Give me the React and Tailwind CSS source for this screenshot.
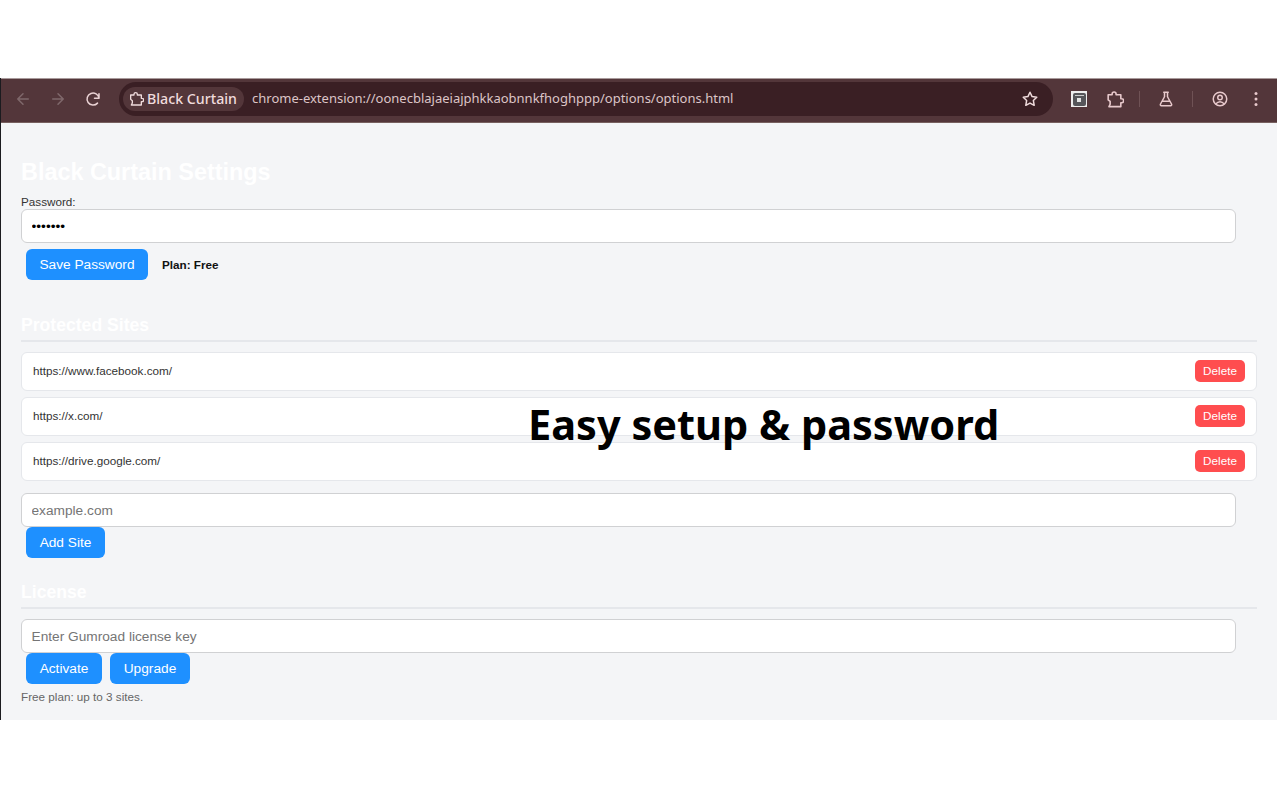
import React from "react";

const Btn = ({ children, w }) => (
  <button className={`h-[31px] ${w} pt-px rounded-[6px] bg-[#1e90ff] text-white text-[13.7px] font-['Liberation_Sans',sans-serif] shrink-0`}>{children}</button>
);

const TextInput = ({ placeholder, value, type = "text" }) => (
  <input
    readOnly
    type={type}
    placeholder={placeholder}
    value={value}
    className="block w-[1215px] h-[34px] px-[9.5px] bg-white border border-[#d0d1d3] rounded-[6px] text-[13.7px] text-black placeholder:text-[#757575] font-['Liberation_Sans',sans-serif] outline-none"
  />
);

const Site = ({ url }) => (
  <div className="h-[39px] flex items-center justify-between pl-[11px] pr-[11px] pb-px bg-white border border-[#e5e7eb] rounded-[6px]">
    <span className="text-[11.7px] text-[#333333]">{url}</span>
    <button className="h-[22px] w-[50px] rounded-[5px] bg-[#ff4d4f] text-white text-[11.7px] font-['Liberation_Sans',sans-serif]">Delete</button>
  </div>
);

const SectionHead = ({ children, cls }) => (
  <div className={`border-b-2 border-[#e5e7eb] text-white font-bold text-[17.6px] leading-[26px] ${cls}`}>{children}</div>
);

const Icon = ({ children, size = 18, cls = "" }) => (
  <svg width={size} height={size} viewBox="0 0 24 24" fill="none" stroke="currentColor" strokeWidth="2" strokeLinecap="round" strokeLinejoin="round" className={cls}>{children}</svg>
);

const Puzzle = ({ size }) => (
  <Icon size={size}>
    <path d="M4 6h5V5a2.5 2.5 0 0 1 5 0v1h6v5h1a2.5 2.5 0 0 1 0 5h-1v5H5l1.5-3v-3.5L4 12.5z" />
  </Icon>
);

export default function App() {
  return (
    <div className="relative w-[1280px] h-[800px] bg-white overflow-hidden font-['Liberation_Sans',sans-serif]">
      <div className="h-[78px]" />
      <div className="w-[1277px] h-[642px] border-l border-[#1b1b1f] flex flex-col">
        <div className="h-[45px] shrink-0 pb-[3px] bg-[#53363a] border-t border-[#a89a9b] border-b border-b-[#77605f] flex items-center text-[#e8c9cc] font-['Noto_Sans',sans-serif]">
          <div className="w-[118px] shrink-0 flex items-center pl-[13px] gap-[17px]">
            <Icon cls="text-[#7f686b]"><path d="M19 12H5M12 19l-7-7 7-7" /></Icon>
            <Icon cls="text-[#7f686b]"><path d="M5 12h14M12 5l7 7-7 7" /></Icon>
            <Icon cls="text-[#ead2d4]"><path d="M20 11a8 8 0 1 0-2 6.5M20 5v6h-6" /></Icon>
          </div>
          <div className="w-[934px] h-[34px] rounded-full bg-[#3a1f24] flex items-center pl-[4px] pr-[14px]">
            <div className="h-[24px] w-[121px] rounded-full bg-[#53363a] flex items-center gap-[3px] pl-[5px] text-[#f0dcdd] text-[14.2px] font-medium">
              <Puzzle size={16} />
              <span className="leading-[24px]">Black Curtain</span>
            </div>
            <span className="ml-[8px] text-[13px] text-[#dcc5c7]">chrome-extension://oonecblajaeiajphkkaobnnkfhoghppp/options/options.html</span>
            <Icon size={18} cls="ml-auto text-[#f0dcdd]"><path d="M12 3l2.8 5.8 6.2.9-4.5 4.4 1.1 6.3L12 17.4l-5.6 3 1.1-6.3L3 9.7l6.2-.9z" /></Icon>
          </div>
          <div className="flex-1 flex items-center pl-[18px]">
            <div className="w-[16px] h-[16px] bg-[#eeeded] flex items-center justify-center">
              <div className="w-[13px] h-[13px] rounded-[2px] bg-[#56565a] flex flex-col items-center pt-[2px] gap-[2px]">
                <div className="w-[9px] h-px bg-[#c9c9c9]" />
                <div className="w-[4px] h-[4px] bg-[#e5e5e5]" />
              </div>
            </div>
            <span className="ml-[18px] text-[#e8c9cc]"><Puzzle size={19} /></span>
            <div className="ml-[15px] w-px h-[16px] bg-[#6f5255]" />
            <Icon size={18} cls="ml-[17px]"><path d="M9 3h6M10 3v6l-5.5 10a1.5 1.5 0 0 0 1.3 2h12.4a1.5 1.5 0 0 0 1.3-2L14 9V3M7.5 15h9" /></Icon>
            <div className="ml-[17px] w-px h-[16px] bg-[#6f5255]" />
            <Icon size={18} cls="ml-[18px]"><circle cx="12" cy="12" r="9" /><circle cx="12" cy="10" r="3" /><path d="M6.5 18.5c1.5-2 3.5-3 5.5-3s4 1 5.5 3" /></Icon>
            <svg width="4" height="16" viewBox="0 0 4 16" className="ml-[25px]" fill="currentColor"><circle cx="2" cy="2.5" r="1.5" /><circle cx="2" cy="8" r="1.5" /><circle cx="2" cy="13.5" r="1.5" /></svg>
          </div>
        </div>

        <div className="flex-1 bg-[#f4f5f7] pl-[20px] pr-[20px] overflow-hidden">
          <h1 className="mt-[35px] h-[28px] text-[23.4px] leading-[28px] font-bold text-white">Black Curtain Settings</h1>
          <div className="mt-[9px] h-[14px] text-[11.7px] leading-[14px] text-[#333333]">Password:</div>
          <TextInput type="password" value="1234567" />
          <div className="mt-[6px] pl-[5px] flex items-center">
            <Btn w="w-[122px]">Save Password</Btn>
            <span className="ml-[14px] text-[11.7px] font-bold text-[#111111]">Plan: Free</span>
          </div>

          <SectionHead cls="mt-[32px] h-[30px]">Protected Sites</SectionHead>
          <div className="mt-[10px] flex flex-col gap-[6px]">
            <Site url="https://www.facebook.com/" />
            <Site url="https://x.com/" />
            <Site url="https://drive.google.com/" />
          </div>
          <div className="mt-[12px]"><TextInput placeholder="example.com" /></div>
          <div className="pl-[5px]"><Btn w="w-[79px]">Add Site</Btn></div>

          <SectionHead cls="mt-[21px] h-[30px]">License</SectionHead>
          <div className="mt-[10px]"><TextInput placeholder="Enter Gumroad license key" /></div>
          <div className="pl-[5px] flex gap-[8px]">
            <Btn w="w-[76px]">Activate</Btn>
            <Btn w="w-[80px]">Upgrade</Btn>
          </div>
          <div className="mt-[6px] text-[11.7px] leading-[14px] text-[#666666]">Free plan: up to 3 sites.</div>
        </div>
      </div>
      <div className="absolute left-[528px] top-[394px] text-[41.5px] leading-[60px] font-bold text-black whitespace-nowrap font-['Noto_Sans',sans-serif]">Easy setup &amp; password</div>
    </div>
  );
}
